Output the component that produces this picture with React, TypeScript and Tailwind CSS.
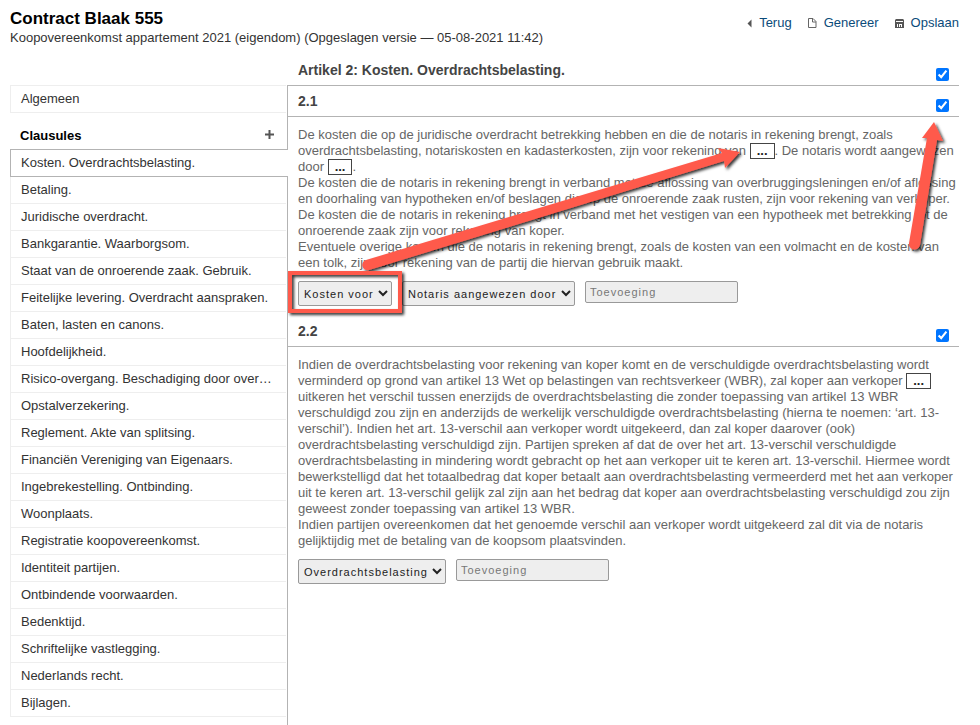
import { useState } from "react";

const CLAUSES = [
  "Kosten. Overdrachtsbelasting.",
  "Betaling.",
  "Juridische overdracht.",
  "Bankgarantie. Waarborgsom.",
  "Staat van de onroerende zaak. Gebruik.",
  "Feitelijke levering. Overdracht aanspraken.",
  "Baten, lasten en canons.",
  "Hoofdelijkheid.",
  "Risico-overgang. Beschadiging door overmacht.",
  "Opstalverzekering.",
  "Reglement. Akte van splitsing.",
  "Financiën Vereniging van Eigenaars.",
  "Ingebrekestelling. Ontbinding.",
  "Woonplaats.",
  "Registratie koopovereenkomst.",
  "Identiteit partijen.",
  "Ontbindende voorwaarden.",
  "Bedenktijd.",
  "Schriftelijke vastlegging.",
  "Nederlands recht.",
  "Bijlagen.",
];

function BackIcon() {
  return (
    <svg width="5" height="9" viewBox="0 0 5 9" aria-hidden="true">
      <path d="M4.5 .5v8L.5 4.5z" fill="#555" />
    </svg>
  );
}

function DocIcon() {
  return (
    <svg width="9" height="10" viewBox="0 0 9 10" fill="none" stroke="#666" aria-hidden="true">
      <path d="M.5 .5h4.500l3 3v6H.5z" />
      <path d="M4.500 .5v3.500h3.500" />
    </svg>
  );
}

function SaveIcon() {
  return (
    <svg width="9" height="9" viewBox="0 0 9 9" aria-hidden="true">
      <path d="M1 0h7l1 1v8H0V1z" fill="#555" />
      <path d="M1 2h7v1H1zM2 5h1v3H2zM4 5h3v3H6V6H5v2H4z" fill="#fff" />
    </svg>
  );
}

const ACTIONS = [
  { label: "Terug", icon: BackIcon },
  { label: "Genereer", icon: DocIcon },
  { label: "Opslaan", icon: SaveIcon },
];

function Blank({ label }: { label: string }) {
  return (
    <button aria-label={label} className="h-4 border border-[#444] bg-white px-[6px] align-bottom text-[13px] leading-[14px] font-bold text-[#222]">
      ...
    </button>
  );
}

function Check({ label }: { label: string }) {
  const [checked, setChecked] = useState(true);
  return (
    <input
      type="checkbox"
      aria-label={label}
      checked={checked}
      onChange={(e) => setChecked(e.target.checked)}
      className="size-[13px] accent-[#0075ff]"
    />
  );
}

function Choice({ label, width }: { label: string; width: string }) {
  return (
    <select
      aria-label={label}
      className={`h-[25px] rounded-xs border border-[#999] bg-[#eee] pl-px text-[11px] tracking-[1px] text-[#222] ${width}`}
    >
      <option>{label}</option>
    </select>
  );
}

function Addition() {
  return (
    <input
      type="text"
      aria-label="Toevoeging"
      placeholder="Toevoeging"
      className="h-[22px] w-[153px] rounded-xs border border-[#999] bg-[#eee] px-1 text-[11px] tracking-[1px] placeholder:text-[#777]"
    />
  );
}

function SectionHeader({ number }: { number: string }) {
  return (
    <div className="flex h-[31px] items-start justify-between border-b border-[#b3b3b3] pr-[10px] pl-[10px]">
      <h3 className="pt-[7px] text-sm leading-4 font-bold text-[#444]">{number}</h3>
      <div className="flex pt-[13px]">
        <Check label={`Artikel ${number}`} />
      </div>
    </div>
  );
}

// Red marker shapes that point the reader from the drop-down to the blank
function Annotations() {
  return (
    <svg
      className="pointer-events-none absolute top-0 left-0 z-20"
      width="980"
      height="330"
      viewBox="0 0 980 330"
      fill="#ff5a4c"
      aria-hidden="true"
    >
      <defs>
        <filter id="shadow" x="-20%" y="-20%" width="140%" height="140%">
          <feDropShadow dx="2" dy="2" stdDeviation="1.5" floodColor="#000" floodOpacity="0.8" />
        </filter>
      </defs>
      <g filter="url(#shadow)">
        <rect x="290" y="273" width="110" height="38" fill="none" stroke="#ff5a4c" strokeWidth="4" />
        <path d="M366 260L722 153L718 148L740 152L725 168L724 161L369 270A5 5 0 0 1 366 260z" />
        <path d="M909 243L927 138L922 138L934 122L943 141L937 140L920 245A5.5 5.5 0 0 1 909 243z" />
      </g>
    </svg>
  );
}

export default function App() {
  const [active, setActive] = useState(0);

  return (
    <div className="relative flex min-h-screen flex-col overflow-x-hidden bg-white font-['Liberation_Sans',Arial,sans-serif] text-[13px] text-[#333]">
      <header className="flex h-[54px] justify-between pr-[21px] pl-[10px]">
        <div className="pt-[10px]">
          <h1 className="text-[17px] leading-[18px] font-bold text-black">Contract Blaak 555</h1>
          <p className="leading-[19px]">Koopovereenkomst appartement 2021 (eigendom) (Opgeslagen versie — 05-08-2021 11:42)</p>
        </div>
        <nav className="flex gap-4 pt-[14px]">
          {ACTIONS.map(({ label, icon: Icon }) => (
            <a key={label} href="#" className="flex h-[18px] items-center gap-[7px] text-[#0b4b7a]">
              <Icon /> {label}
            </a>
          ))}
        </nav>
      </header>

      <div className="flex flex-1 pr-[21px] pl-[10px]">
        <aside className="w-[277px] shrink-0 pt-[31px]">
          <a href="#" className="mr-px block h-7 border border-r-0 border-[#eee] pl-[10px] leading-[26px]">
            Algemeen
          </a>
          <div className="flex h-9 items-center justify-between pt-[9px] pr-[13px] pl-[10px]">
            <h2 className="font-bold text-black">Clausules</h2>
            <button aria-label="Clausule toevoegen" className="pb-[2px]">
              <svg width="9" height="9" viewBox="0 0 9 9" fill="#555" aria-hidden="true">
                <path d="M3.5 0h2v3.5h3.5v2h-3.5v3.5h-2v-3.5h-3.5v-2h3.5z" />
              </svg>
            </button>
          </div>
          <ul>
            {CLAUSES.map((clause, i) => (
              <li key={clause}>
                <a
                  href="#"
                  onClick={() => setActive(i)}
                  className={
                    i === active
                      ? "relative z-10 -mr-px block h-7 truncate border border-r-0 border-[#b3b3b3] bg-white pr-3 pl-[10px] leading-[26px]"
                      : "mr-px block h-[27px] truncate border-b border-l border-[#eee] pr-3 pl-[10px] leading-[26px]"
                  }
                >
                  {clause}
                </a>
              </li>
            ))}
          </ul>
        </aside>

        <main className="flex min-w-0 flex-1 flex-col">
          <div className="flex h-8 items-start justify-between border-b border-[#b3b3b3] pr-[10px] pl-[11px]">
            <h2 className="pt-2 text-sm leading-4 font-bold text-[#444]">Artikel 2: Kosten. Overdrachtsbelasting.</h2>
            <div className="flex pt-[14px]">
              <Check label="Artikel 2" />
            </div>
          </div>

          <div className="flex-1 border-l border-[#b3b3b3]">
            <section>
              <SectionHeader number="2.1" />
              <div className="pt-[10px] pl-[10px] leading-4 text-[#666]">
                <p>
                  De kosten die op de juridische overdracht betrekking hebben en die de notaris in rekening brengt, zoals
                  overdrachtsbelasting, notariskosten en kadasterkosten, zijn voor rekening van <Blank label="Kosten voor" />. De
                  notaris wordt aangewezen door <Blank label="Notaris aangewezen door" />.
                </p>
                <p>
                  De kosten die de notaris in rekening brengt in verband met de aflossing van overbruggingsleningen en/of aflossing
                  en doorhaling van hypotheken en/of beslagen die op de onroerende zaak rusten, zijn voor rekening van verkoper.
                </p>
                <p>
                  De kosten die de notaris in rekening brengt in verband met het vestigen van een hypotheek met betrekking tot de
                  onroerende zaak zijn voor rekening van koper.
                </p>
                <p>
                  Eventuele overige kosten die de notaris in rekening brengt, zoals de kosten van een volmacht en de kosten van
                  een tolk, zijn voor rekening van de partij die hiervan gebruik maakt.
                </p>
                <div className="flex items-start gap-[10px] pt-[10px] pb-[10px]">
                  <Choice label="Kosten voor" width="w-[94px]" />
                  <Choice label="Notaris aangewezen door" width="w-[173px]" />
                  <Addition />
                </div>
              </div>
            </section>

            <section>
              <SectionHeader number="2.2" />
              <div className="pt-[10px] pl-[10px] leading-4 text-[#666]">
                <p>
                  Indien de overdrachtsbelasting voor rekening van koper komt en de verschuldigde overdrachtsbelasting wordt
                  verminderd op grond van artikel 13 Wet op belastingen van rechtsverkeer (WBR), zal koper aan verkoper{" "}
                  <Blank label="Overdrachtsbelasting" /> uitkeren het verschil tussen enerzijds de overdrachtsbelasting die zonder
                  toepassing van artikel 13 WBR verschuldigd zou zijn en anderzijds de werkelijk verschuldigde
                  overdrachtsbelasting (hierna te noemen: ‘art. 13-verschil’). Indien het art. 13-verschil aan verkoper wordt
                  uitgekeerd, dan zal koper daarover (ook) overdrachtsbelasting verschuldigd zijn. Partijen spreken af dat de over
                  het art. 13-verschil verschuldigde overdrachtsbelasting in mindering wordt gebracht op het aan verkoper uit te
                  keren art. 13-verschil. Hiermee wordt bewerkstelligd dat het totaalbedrag dat koper betaalt aan
                  overdrachtsbelasting vermeerderd met het aan verkoper uit te keren art. 13-verschil gelijk zal zijn aan het
                  bedrag dat koper aan overdrachtsbelasting verschuldigd zou zijn geweest zonder toepassing van artikel 13 WBR.
                </p>
                <p>
                  Indien partijen overeenkomen dat het genoemde verschil aan verkoper wordt uitgekeerd zal dit via de notaris
                  gelijktijdig met de betaling van de koopsom plaatsvinden.
                </p>
                <div className="flex items-start gap-[10px] pt-[10px] pb-[10px]">
                  <Choice label="Overdrachtsbelasting" width="w-[148px]" />
                  <Addition />
                </div>
              </div>
            </section>
          </div>
        </main>
      </div>

      <Annotations />
    </div>
  );
}
